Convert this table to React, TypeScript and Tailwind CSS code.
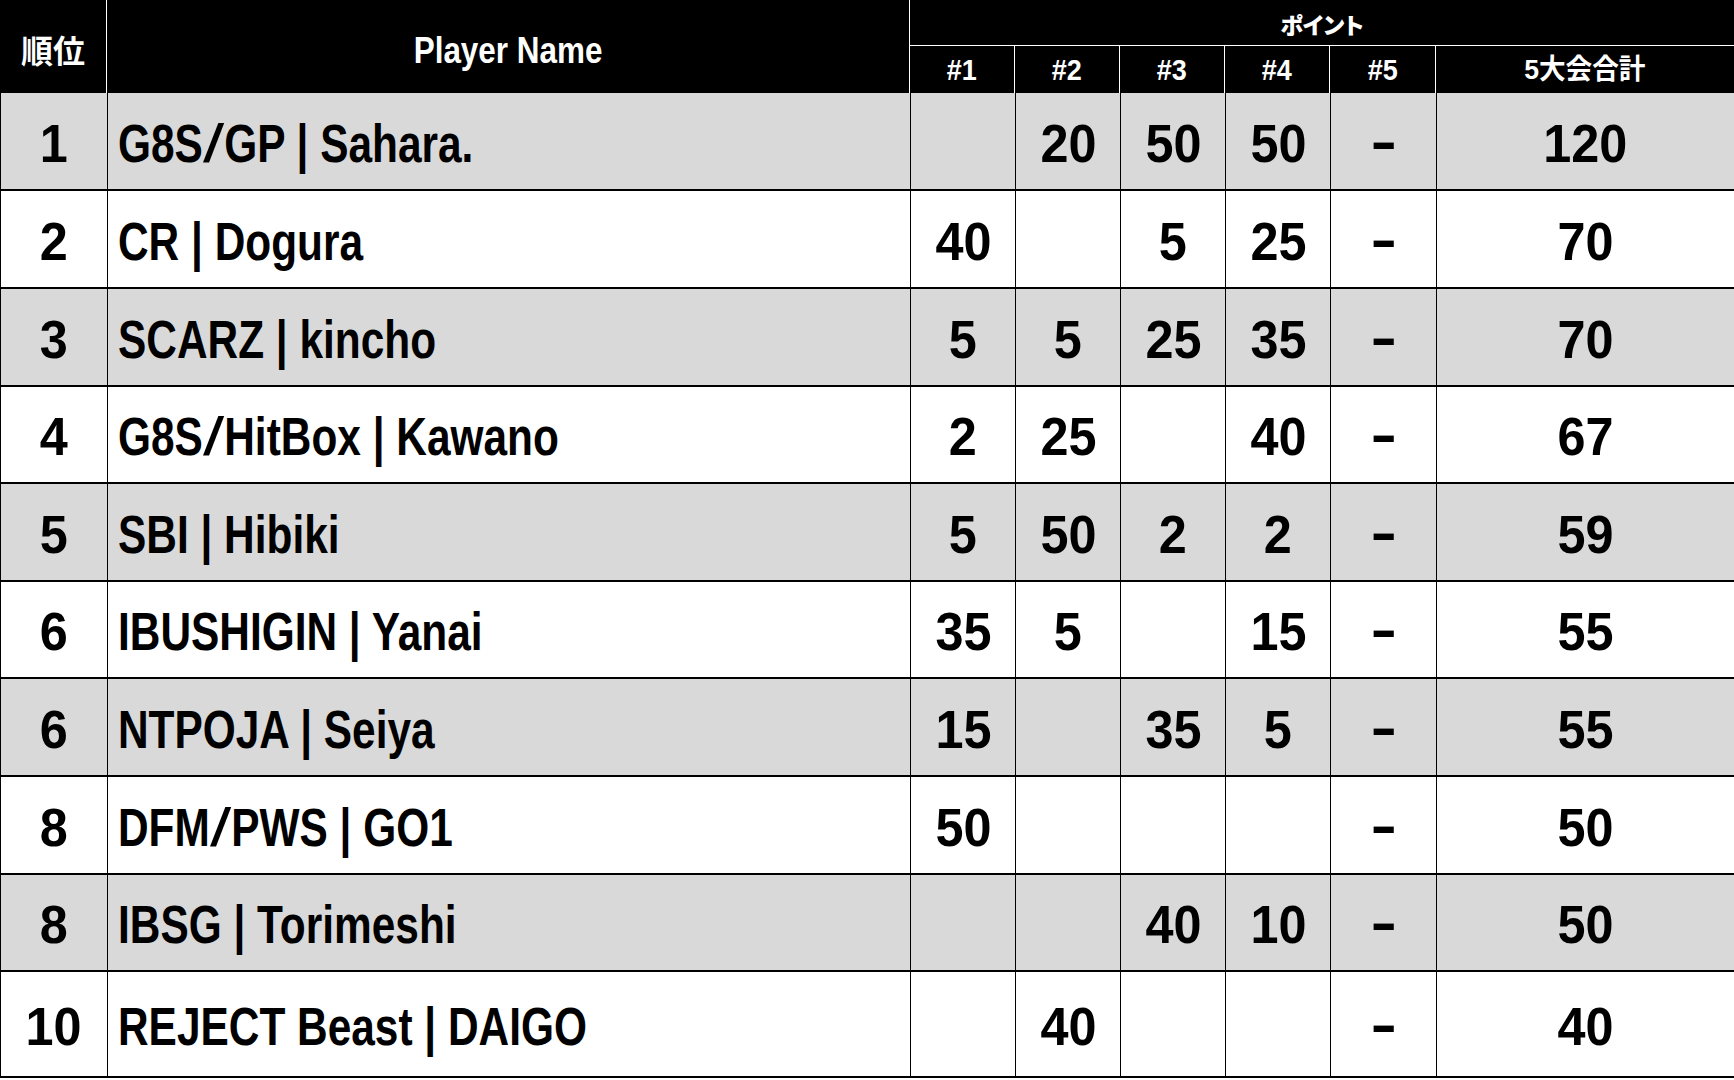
type Row = {
  rank: string;
  name: string;
  pts: [string, string, string, string, string];
  total: string;
  gray: boolean;
  h: string;
};

const ROWS: Row[] = [
  { rank: '1', name: 'G8S/GP | Sahara.', pts: ['', '20', '50', '50', '-'], total: '120', gray: true, h: 'h-[98px]' },
  { rank: '2', name: 'CR | Dogura', pts: ['40', '', '5', '25', '-'], total: '70', gray: false, h: 'h-[98px]' },
  { rank: '3', name: 'SCARZ | kincho', pts: ['5', '5', '25', '35', '-'], total: '70', gray: true, h: 'h-[98px]' },
  { rank: '4', name: 'G8S/HitBox | Kawano', pts: ['2', '25', '', '40', '-'], total: '67', gray: false, h: 'h-[97px]' },
  { rank: '5', name: 'SBI | Hibiki', pts: ['5', '50', '2', '2', '-'], total: '59', gray: true, h: 'h-[98px]' },
  { rank: '6', name: 'IBUSHIGIN | Yanai', pts: ['35', '5', '', '15', '-'], total: '55', gray: false, h: 'h-[97px]' },
  { rank: '6', name: 'NTPOJA | Seiya', pts: ['15', '', '35', '5', '-'], total: '55', gray: true, h: 'h-[98px]' },
  { rank: '8', name: 'DFM/PWS | GO1', pts: ['50', '', '', '', '-'], total: '50', gray: false, h: 'h-[98px]' },
  { rank: '8', name: 'IBSG | Torimeshi', pts: ['', '', '40', '10', '-'], total: '50', gray: true, h: 'h-[97px]' },
  { rank: '10', name: 'REJECT Beast | DAIGO', pts: ['', '40', '', '', '-'], total: '40', gray: false, h: 'h-[106px]' },
];

const FONT = "font-['Liberation_Sans','Noto_Sans_CJK_JP',sans-serif]";

// one grid template shared by the header and every body row
const COLS = 'grid grid-cols-[107px_803px_105px_105px_105px_105px_106px_298px]';

const HEAD_CELL = 'flex items-center justify-center border-r border-white text-white font-bold';
const BODY_CELL = 'flex items-center justify-center border-r border-black';

/* The sheet uses a condensed gothic; squeeze Liberation Sans to match. */
function Narrow({ children, left, digits }: { children: React.ReactNode; left?: boolean; digits?: boolean }) {
  return (
    <span
      className={`inline-block whitespace-nowrap ${digits ? 'scale-x-[0.95]' : 'scale-x-[0.8]'} ${
        left ? 'origin-left' : 'origin-center'
      }`}
    >
      {children}
    </span>
  );
}

// the sheet's slash is a wide, long glyph
function PlayerName({ name }: { name: string }) {
  const parts = name.split('/');
  return (
    <Narrow left>
      {parts.map((p, i) => (
        <span key={i}>
          {i > 0 && <span className="inline-block mx-[6px] scale-x-[1.8] font-normal">/</span>}
          {p}
        </span>
      ))}
    </Narrow>
  );
}

function Points({ value }: { value: string }) {
  if (value === '-') {
    return <span className="inline-block scale-x-[1.5] -translate-y-[2px]">-</span>;
  }
  return <Narrow digits>{value}</Narrow>;
}

export default function App() {
  return (
    <div className={`w-[1734px] h-[1080px] bg-white ${FONT} [font-feature-settings:'palt']`}>
      {/* Header */}
      <div className={`${COLS} grid-rows-[46px_47px] bg-black`}>
        <div className={`${HEAD_CELL} row-span-2 text-[32px] pt-1 font-['Noto_Sans_CJK_JP',sans-serif] font-black`}>
          順位
        </div>
        <div className={`${HEAD_CELL} row-span-2 text-[37px] pt-2`}>
          <span className="inline-block scale-x-[0.85]">Player Name</span>
        </div>
        <div className="col-span-6 flex items-center justify-center border-b border-white text-white font-black text-[23px] pt-1 font-['Noto_Sans_CJK_JP',sans-serif]">
          ポイント
        </div>
        {['#1', '#2', '#3', '#4', '#5'].map((h) => (
          <div key={h} className={`${HEAD_CELL} text-[30px]`}>
            <span className="inline-block scale-x-[0.9]">{h}</span>
          </div>
        ))}
        <div className="flex items-center justify-center text-white font-bold text-[28px]">
          <span className="inline-block scale-x-[0.95]">5大会合計</span>
        </div>
      </div>

      {/* Body */}
      {ROWS.map((r, i) => (
        <div
          key={i}
          className={`${COLS} ${r.h} border-l border-b-2 border-black ${
            r.gray ? 'bg-[#d9d9d9]' : 'bg-white'
          } text-black font-bold text-[53px] leading-none`}
        >
          <div className={`${BODY_CELL} -ml-px pt-1`}>
            <Narrow digits>{r.rank}</Narrow>
          </div>
          <div className={`${BODY_CELL} justify-start pl-[10px] pt-1`}>
            <PlayerName name={r.name} />
          </div>
          {r.pts.map((p, j) => (
            <div key={j} className={`${BODY_CELL} pt-1`}>
              <Points value={p} />
            </div>
          ))}
          <div className={`${BODY_CELL} pt-1`}>
            <Narrow digits>{r.total}</Narrow>
          </div>
        </div>
      ))}
    </div>
  );
}
